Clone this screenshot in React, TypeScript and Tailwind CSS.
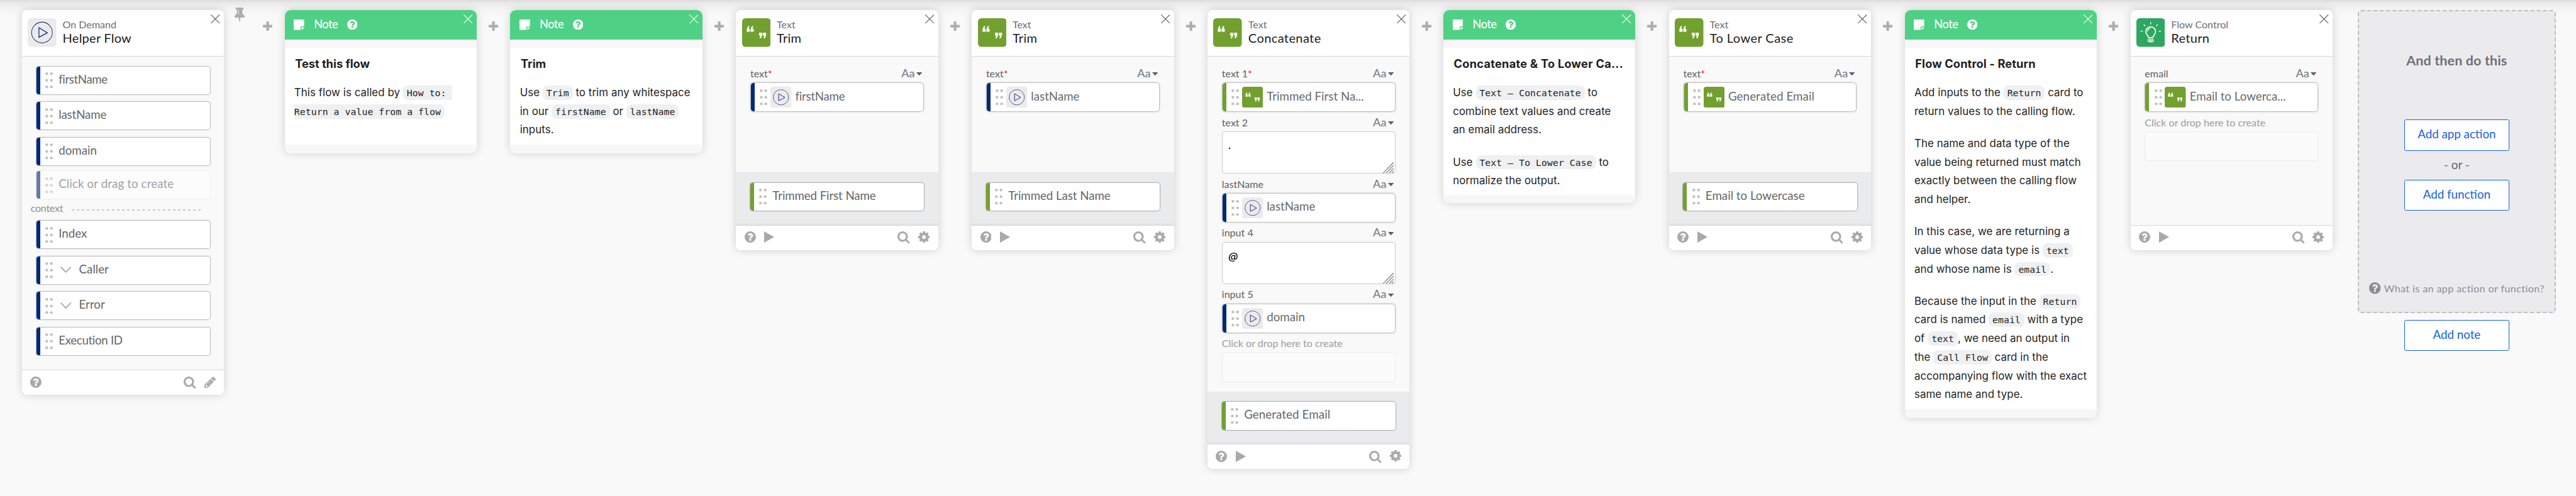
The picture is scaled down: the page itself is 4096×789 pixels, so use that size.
import React, { ReactNode } from "react";

const GLYPHS = {
  search:
    "M1152 832q0-185-131.5-316.5t-316.5-131.5-316.5 131.5-131.5 316.5 131.5 316.5 316.5 131.5 316.5-131.5 131.5-316.5zm512 832q0 52-38 90t-90 38q-54 0-90-38l-343-342q-179 124-399 124-143 0-273.5-55.5t-225-150-150-225-55.5-273.5 55.5-273.5 150-225 225-150 273.5-55.5 273.5 55.5 225 150 150 225 55.5 273.5q0 220-124 399l343 343q37 37 37 90z",
  cog:
    "M1152 896q0-106-75-181t-181-75-181 75-75 181 75 181 181 75 181-75 75-181zm512-109v222q0 12-8 23t-20 13l-185 28q-19 54-39 91 35 50 107 138 10 12 10 25t-9 23q-27 37-99 108t-94 71q-12 0-26-9l-138-108q-44 23-91 38-16 136-29 186-7 28-36 28h-222q-14 0-24.5-8.5t-11.5-21.5l-28-184q-49-16-90-37l-141 107q-10 9-25 9-14 0-25-11-126-114-165-168-7-10-7-23 0-12 8-23 15-21 51-66.5t54-70.5q-27-50-41-99l-183-27q-13-2-21-12.5t-8-23.5v-222q0-12 8-23t19-13l186-28q14-46 39-92-40-57-107-138-10-12-10-24 0-10 9-23 26-36 98.5-107.5t94.5-71.5q13 0 26 10l138 107q44-23 91-38 16-136 29-186 7-28 36-28h222q14 0 24.5 8.5t11.5 21.5l28 184q49 16 90 37l142-107q9-9 24-9 13 0 25 10 129 119 165 170 7 8 7 22 0 12-8 23-15 21-51 66.5t-54 70.5q26 50 41 98l183 28q13 2 21 12.5t8 23.5z",
  help:
    "M1024 1376v-192q0-14-9-23t-23-9h-192q-14 0-23 9t-9 23v192q0 14 9 23t23 9h192q14 0 23-9t9-23zm256-672q0-88-55.5-163t-138.5-116-170-41q-243 0-371 213-15 24 8 42l132 100q7 6 19 6 16 0 25-12 53-68 86-92 34-24 86-24 48 0 85.5 26t37.5 59q0 38-20 61t-68 45q-63 28-115.5 86.5t-52.5 125.5v36q0 14 9 23t23 9h192q14 0 23-9t9-23q0-19 21.5-49.5t54.5-49.5q32-18 49-28.5t46-35 44.5-48 28-60.5 12.5-81zm384 192q0 209-103 385.5t-279.5 279.5-385.5 103-385.5-103-279.5-279.5-103-385.5 103-385.5 279.5-279.5 385.5-103 385.5 103 279.5 279.5 103 385.5z",
  pencil:
    "M491 1536l91-91-235-235-91 91v107h128v128h107zm523-928q0-22-22-22-10 0-17 7l-542 542q-7 7-7 17 0 22 22 22 10 0 17-7l542-542q7-7 7-17zm-54-192l416 416-832 832h-416v-416zm683 96q0 53-37 90l-166 166-416-416 166-165q36-38 90-38 53 0 91 38l235 234q37 39 37 91z",
  pin:
    "M800 864v-448q0-14-9-23t-23-9-23 9-9 23v448q0 14 9 23t23 9 23-9 9-23zm672 352q0 26-19 45t-45 19h-429l-51 483q-2 12-10.5 20.5t-20.5 8.5h-1q-27 0-32-27l-76-485h-404q-26 0-45-19t-19-45q0-123 78.5-221.5t177.5-98.5v-512q-52 0-90-38t-38-90 38-90 90-38h640q52 0 90 38t38 90-38 90-90 38v512q99 0 177.5 98.5t78.5 221.5z",
  plus:
    "M1600 736v192q0 40-28 68t-68 28h-416v416q0 40-28 68t-68 28h-192q-40 0-68-28t-28-68v-416h-416q-40 0-68-28t-28-68v-192q0-40 28-68t68-28h416v-416q0-40 28-68t68-28h192q40 0 68 28t28 68v416h416q40 0 68 28t28 68z",
  note:
    "M1152 1248v416h-928q-40 0-68-28t-28-68v-1344q0-40 28-68t68-28h1344q40 0 68 28t28 68v928h-416q-40 0-68 28t-28 68zm128 32h381q-15 82-65 132l-184 184q-50 50-132 65v-381z",
};

const Glyph = ({ name, box = "128 128 1536 1536", className }: { name: keyof typeof GLYPHS; box?: string; className: string }) => (
  <svg viewBox={box} className={className} fill="currentColor" preserveAspectRatio="xMidYMid meet">
    <path d={GLYPHS[name]} />
  </svg>
);

const FlowIcon = ({ className }: { className: string }) => (
  <svg viewBox="0 0 34 34" className={className} fill="none">
    <rect width="34" height="34" rx="4" fill="#ebebeb" />
    <circle cx="17" cy="17" r="13.1" stroke="#fff" strokeWidth="1" />
    <circle cx="17" cy="17" r="12.4" stroke="#1f2a7c" strokeWidth="0.8" />
    <path d="M13.4 11.3V22.7L23.4 17.3Z" stroke="#1f2a7c" strokeWidth="1" />
  </svg>
);

const TextIcon = ({ className }: { className: string }) => (
  <svg viewBox="0 0 34 34" className={className}>
    <rect width="34" height="34" rx="4" fill="#72a02f" />
    <g fill="#fff">
      <path d="M5.5 16V12.8L7.1 9.3H8.6L7.7 12.5H9.2V16Z M10.1 16V12.8L11.7 9.3H13.2L12.3 12.5H13.8V16Z" />
      <path d="M28.5 17.2V20.4L26.9 23.9H25.4L26.3 20.7H24.8V17.2Z M23.9 17.2V20.4L22.3 23.9H20.8L21.7 20.7H20.2V17.2Z" />
    </g>
  </svg>
);

const BulbIcon = ({ className }: { className: string }) => (
  <svg viewBox="0 0 34 34" className={className} fill="none" stroke="#fff">
    <rect width="34" height="34" rx="4" fill="#2fa760" stroke="none" />
    <path d="M14.6 23.2C14.4 20.6 11.2 19.6 11.2 15.9A5.8 5.8 0 0 1 22.8 15.9C22.8 19.6 19.6 20.6 19.4 23.2Z" strokeWidth="1.3" strokeLinejoin="round" />
    <path d="M13.1 15.6A3.9 3.9 0 0 1 16.6 12.1" strokeWidth="1" strokeLinecap="round" />
    <path d="M14.1 25.3H19.9V26.5Q19.9 28 18.4 28H15.6Q14.1 28 14.1 26.5Z" strokeWidth="1" />
    <path d="M15.6 26.6H18.4" strokeWidth="0.8" />
    <path d="M17 4.6V7.2M8.7 7.4L10.5 9.3M25.3 7.4L23.5 9.3M5 15.4H7.5M26.6 15.4H29.1" strokeWidth="1" />
  </svg>
);

const Cross = ({ className }: { className: string }) => (
  <svg viewBox="0 0 11 11" className={className} fill="none" stroke="currentColor" strokeWidth="0.8">
    <path d="M0.2 0.2L10.8 10.8M10.8 0.2L0.2 10.8" />
  </svg>
);

const Dots = () => (
  <svg viewBox="0 0 9 19" className="ml-[6.2px] h-[19px] w-[9px] shrink-0" fill="#c2c2c2">
    {[1.7, 9.5, 17.3].map((y) => (
      <g key={y}>
        <circle cx="1.75" cy={y} r="1.7" />
        <circle cx="7.25" cy={y} r="1.7" />
      </g>
    ))}
  </svg>
);

const Bar = ({ green }: { green?: boolean }) => (
  <div className={green ? "h-full w-[4.6px] shrink-0 bg-[#72a02f]" : "h-full w-[4.6px] shrink-0 bg-[#00287a]"} />
);

type ChipProps = { label: string; green?: boolean; nested?: boolean; muted?: boolean; track?: string };

const Chip = ({ label, green, nested, muted, track = "" }: ChipProps) => (
  <div className={muted ? "opacity-60" : ""}>
    <div
      className={`flex h-[33px] w-[206.4px] items-center overflow-hidden rounded-[3px] bg-white ${
        muted ? "shadow-[0_0_1.5px_rgba(0,0,0,.25)]" : "shadow-[0_0_0_.7px_rgba(0,0,0,.17),0_0_2px_rgba(0,0,0,.28)]"
      }`}
    >
      <Bar green={green} />
      <Dots />
      {nested && (
        <svg viewBox="0 0 13 7.5" className="mb-px ml-[9px] h-[7.5px] w-[13px]" fill="none" stroke="#aaa" strokeWidth="1.4" strokeLinecap="round">
          <path d="M0.9 0.8L6.5 6.6L12.1 0.8" />
        </svg>
      )}
      <span className={`${nested ? "ml-[9px]" : "ml-[6.8px]"} pb-[2.5px] text-[14px] leading-5 whitespace-nowrap text-[#666] ${track}`}>{label}</span>
    </div>
  </div>
);

const TypePicker = () => (
  <span className="flex items-center text-[#6c7883]">
    <span className="pb-px text-[13.6px] leading-[22px]">Aa</span>
    <svg viewBox="0 0 7 4" className="mt-px mr-[2px] ml-[1.6px] h-1 w-[7px]" fill="#5e5e5e">
      <path d="M0 0H7L3.5 4Z" />
    </svg>
  </span>
);

const Field = ({ label, required, children }: { label: string; required?: boolean; children: ReactNode }) => (
  <div className="w-[206px]">
    <div className="flex h-[23.2px] items-center justify-between pt-[2px]">
      <span className="text-[12px] leading-5 text-[#5f5f5f]">
        {label}
        {required && <span className="text-[#f00]">*</span>}
      </span>
      <TypePicker />
    </div>
    {children}
  </div>
);

const InputChip = ({ label, green, track = "" }: ChipProps) => (
  <div className="flex h-[35px] items-center overflow-hidden rounded-[4px] border border-[#bfbfbf] bg-white shadow-[0_0_2px_rgba(0,0,0,.2)]">
    <Bar green={green} />
    <Dots />
    {green ? <TextIcon className="ml-[3.4px] size-[25px] shrink-0" /> : <FlowIcon className="ml-[3.4px] size-[25px] shrink-0" />}
    <span className={`ml-[4.4px] pb-[2.5px] text-[14px] leading-5 whitespace-nowrap text-[#6a6a6a] ${track}`}>{label}</span>
  </div>
);

const TextBox = ({ value }: { value: string }) => (
  <div className="flex h-[50px] items-start justify-between rounded-[3px] border border-[#c8c8c8] bg-white pr-px pl-[7px]">
    <span className="pt-[7px] font-['Inter'] text-[11.5px] leading-5 font-medium text-black italic">{value}</span>
    <svg viewBox="0 0 13 13" className="size-[13px] self-end" fill="none" stroke="#666" strokeWidth="0.8">
      <path d="M12.6 0.2L0.2 12.8M12.6 3.8L3.8 12.8M12.6 7.4L7.4 12.8M12.6 10.6L10.6 12.8" />
    </svg>
  </div>
);

const DropTarget = () => (
  <div className="w-[206px]">
    <div className="flex h-[23.2px] items-center pt-[2px] text-[12px] leading-5 text-[#9c9c9c]">Click or drop here to create</div>
    <div className="h-[35px] rounded-[3px] border border-[#ebebeb] bg-[#fbfbfb]" />
  </div>
);

const CARD_SHADOW = "shadow-[0_0_10px_rgba(0,0,0,.17)]";

type CardProps = {
  app: string;
  title: string;
  icon: ReactNode;
  body: string;
  helper?: boolean;
  output?: ReactNode;
  titleTrack?: string;
  children: ReactNode;
};

const Card = ({ app, title, icon, body, helper, output, titleTrack = "tracking-[.2px]", children }: CardProps) => (
  <section className={`w-60 shrink-0 overflow-hidden rounded-[6px] bg-white ${CARD_SHADOW}`}>
    <header className="flex h-[55px] items-start border-b border-[#d7d7dc]">
      <div className="pt-[10px] pl-[7px]">{icon}</div>
      <div className="flex-1 pt-[9.5px] pl-[7.4px]">
        <div className="text-[12px] leading-[15px] text-[#6e6e78]">{app}</div>
        <div className={`text-[15px] leading-[16.5px] text-[#1d1d21] ${titleTrack}`}>{title}</div>
      </div>
      <Cross className="mt-[5px] mr-[4.7px] size-[10.8px] text-[#555]" />
    </header>
    <div className={`bg-[#f9f9f9] pl-[17px] ${body}`}>{children}</div>
    {output && <div className="h-[62px] bg-[#eaebed] pt-[12px] pl-[16.8px] shadow-[inset_0_-4px_4px_-3px_rgba(0,0,0,.06)]">{output}</div>}
    <footer className="flex h-[30px] items-center border-t border-[#d7d7dc] pr-[10px] pb-px pl-[10px] text-[#a9a9a9]">
      <Glyph name="help" className="size-[13.4px]" />
      {!helper && (
        <svg viewBox="0 0 12 13.5" className="ml-[10.3px] h-[13.5px] w-3" fill="currentColor">
          <path d="M0 0L12 6.75L0 13.5Z" />
        </svg>
      )}
      <span className="flex-1" />
      <Glyph name="search" box="0 128 1664 1664" className="mt-px size-[14.6px]" />
      {helper ? <Glyph name="pencil" className="ml-[9.4px] size-[13.6px]" /> : <Glyph name="cog" className="mb-px ml-[9.8px] size-[13.6px]" />}
    </footer>
  </section>
);

const Code = ({ children }: { children: string }) => (
  <code className="rounded-[6px] bg-[#eff0f2] px-[.4em] py-[.2em] font-['DejaVu_Sans_Mono',monospace] text-[11.05px]">{children}</code>
);

const NoteCard = ({ title, body, track = "", children }: { title: string; body: string; track?: string; children: ReactNode }) => (
  <section className={`w-57 shrink-0 overflow-hidden rounded-[7px] bg-[#f7f7f7] pb-[10px] ${CARD_SHADOW}`}>
    <header className="flex h-[35px] items-start bg-[#4fd185] text-white">
      <Glyph name="note" className="mt-[11.5px] ml-[11px] size-[12.4px]" />
      <span className="mt-[6.9px] ml-[11.4px] text-[13.6px] leading-5 font-medium tracking-[-.35px]">Note</span>
      <Glyph name="help" className="mt-[11px] ml-[10.8px] size-[12.2px]" />
      <span className="flex-1" />
      <Cross className="mt-[5px] mr-[4.9px] size-[10.8px] text-white" />
    </header>
    <div className={`mt-[10px] bg-white pt-[8.5px] pl-[11.4px] text-[#1d1d21] ${body}`}>
      <h2 className={`pl-px font-['Inter'] text-[13.6px] leading-5 font-bold whitespace-nowrap ${track}`}>{title}</h2>
      <div className="mt-[13.8px] flex flex-col gap-4 font-['Inter'] text-[12.6px] leading-[22.2px] tracking-[.05px] whitespace-pre">{children}</div>
    </div>
  </section>
);

const Add = () => (
  <div className="flex w-10 shrink-0 justify-center pt-[13.5px] text-[#adadad]">
    <Glyph name="plus" box="192 128 1408 1408" className="size-[11.4px]" />
  </div>
);

const Button = ({ children, className = "" }: { children: string; className?: string }) => (
  <button className={`block h-[36.8px] w-[125px] rounded-[2px] border border-[#1662dd] bg-white pb-[2.5px] text-[14px] text-[#1662dd] ${className}`}>{children}</button>
);

export default function App() {
  return (
    <main className="flex h-[589.5px] w-[3059px] items-start overflow-hidden bg-[#f9f9f9] bg-[linear-gradient(to_bottom,#dcdcdc_0,#e8e8e8_3px,#efefef_7px,#f5f5f5_12px,#f9f9f9_20px)] pt-3 pl-[26px] font-['Lato',sans-serif] [zoom:1.339]">
      <Card app="On Demand" title="Helper Flow" titleTrack="tracking-[.16px]" icon={<FlowIcon className="size-[34px]" />} body="h-[372px]" helper>
        <div className="flex flex-col gap-[9.2px] pt-3">
          <Chip label="firstName" track="tracking-[-.3px]" />
          <Chip label="lastName" track="tracking-[-.1px]" />
          <Chip label="domain" />
        </div>
        <div className="pt-[7px]">
          <Chip label="Click or drag to create" track="tracking-[.08px]" muted />
        </div>
        <div className="-ml-[6.6px] flex h-[26px] items-center">
          <span className="pb-[4.5px] text-[12px] leading-4 tracking-[-.2px] text-[#8f8f8f]">context</span>
          <span className="ml-[10px] h-px w-[156px] bg-[repeating-linear-gradient(to_right,#c9c9c9_0,#c9c9c9_3px,transparent_3px,transparent_6px)]" />
        </div>
        <div className="flex flex-col gap-[9.2px]">
          <Chip label="Index" />
          <Chip label="Caller" nested />
          <Chip label="Error" nested />
          <Chip label="Execution ID" track="tracking-[-.25px]" />
        </div>
      </Card>

      <div className="flex w-[72px] shrink-0 items-start text-[#adadad]">
        <Glyph name="pin" box="320 128 1152 1664" className="-mt-[3px] ml-[12.4px] h-[17.2px] w-[12px]" />
        <Glyph name="plus" box="192 128 1408 1408" className="mt-[13.5px] ml-[21.9px] size-[11.4px]" />
      </div>

      <NoteCard title="Test this flow" body="h-[115px]">
        <p>
          This flow is called by <Code>{"How to: \nReturn a value from a flow"}</Code>
        </p>
      </NoteCard>
      <Add />
      <NoteCard title="Trim" body="h-[115px]">
        <p>
          Use <Code>Trim</Code> to trim any whitespace
          <br />
          in our <Code>firstName</Code> or <Code>lastName</Code>
          <br />
          inputs.
        </p>
      </NoteCard>
      <Add />

      <Card app="Text" title="Trim" icon={<TextIcon className="size-[34px]" />} body="h-[138px] pt-[7.8px]" output={<Chip label="Trimmed First Name" track="tracking-[-.09px]" green />}>
        <Field label="text" required>
          <InputChip label="firstName" track="tracking-[-.2px]" />
        </Field>
      </Card>
      <Add />

      <Card app="Text" title="Trim" icon={<TextIcon className="size-[34px]" />} body="h-[138px] pt-[7.8px]" output={<Chip label="Trimmed Last Name" track="tracking-[-.05px]" green />}>
        <Field label="text" required>
          <InputChip label="lastName" />
        </Field>
      </Card>
      <Add />

      <Card app="Text" title="Concatenate" titleTrack="tracking-[.27px]" icon={<TextIcon className="size-[34px]" />} body="h-[398.5px] pt-[7.8px]" output={<Chip label="Generated Email" track="tracking-[.07px]" green />}>
        <Field label="text 1" required>
          <InputChip label="Trimmed First Na..." green />
        </Field>
        <Field label="text 2">
          <TextBox value="." />
        </Field>
        <Field label="lastName">
          <InputChip label="lastName" />
        </Field>
        <Field label="input 4">
          <TextBox value="@" />
        </Field>
        <Field label="input 5">
          <InputChip label="domain" />
        </Field>
        <DropTarget />
      </Card>
      <Add />

      <NoteCard title="Concatenate & To Lower Ca..." body="h-[174.5px]" track="tracking-[.19px]">
        <p>
          Use <Code>Text – Concatenate</Code> to
          <br />
          combine text values and create
          <br />
          an email address.
        </p>
        <p>
          Use <Code>Text – To Lower Case</Code> to
          <br />
          normalize the output.
        </p>
      </NoteCard>
      <Add />

      <Card app="Text" title="To Lower Case" titleTrack="tracking-[.31px]" icon={<TextIcon className="size-[34px]" />} body="h-[138px] pt-[7.8px]" output={<Chip label="Email to Lowercase" green />}>
        <Field label="text" required>
          <InputChip label="Generated Email" track="tracking-[.07px]" green />
        </Field>
      </Card>
      <Add />

      <NoteCard title="Flow Control - Return" body="h-[429.5px]" track="tracking-[.1px]">
        <p>
          Add inputs to the <Code>Return</Code> card to
          <br />
          return values to the calling flow.
        </p>
        <p>
          The name and data type of the
          <br />
          value being returned must match
          <br />
          exactly between the calling flow
          <br />
          and helper.
        </p>
        <p>
          In this case, we are returning a
          <br />
          value whose data type is <Code>text</Code>
          <br />
          and whose name is <Code>email</Code>.
        </p>
        <p>
          Because the input in the <Code>Return</Code>
          <br />
          card is named <Code>email</Code> with a type
          <br />
          of <Code>text</Code>, we need an output in
          <br />
          the <Code>Call Flow</Code> card in the
          <br />
          accompanying flow with the exact
          <br />
          same name and type.
        </p>
      </NoteCard>
      <Add />

      <Card app="Flow Control" title="Return" icon={<BulbIcon className="size-[34px]" />} body="h-[200px] pt-[7.8px]">
        <Field label="email">
          <InputChip label="Email to Lowerca..." green />
        </Field>
        <DropTarget />
      </Card>

      <aside className="ml-[30px] flex w-[235px] shrink-0 flex-col items-center">
        <div className="flex h-[360px] w-full flex-col items-center rounded-[4px] border-2 border-dashed border-[#bdbdbd] bg-[#ebebed]">
          <h2 className="mt-[46px] text-[16px] leading-6 font-bold tracking-[.12px] text-[#6e6e78]">And then do this</h2>
          <Button className="mt-[58.6px]">Add app action</Button>
          <div className="h-[34.6px] pt-[7px] text-[14px] leading-5 text-[#666]">- or -</div>
          <Button>Add function</Button>
          <div className="mt-[81.5px] flex items-center text-[#8c8c96]">
            <Glyph name="help" className="size-[13.8px]" />
            <span className="ml-[4px] pt-px text-[12px] leading-5 tracking-[.31px]">What is an app action or function?</span>
          </div>
        </div>
        <Button className="mt-2">Add note</Button>
      </aside>
    </main>
  );
}
